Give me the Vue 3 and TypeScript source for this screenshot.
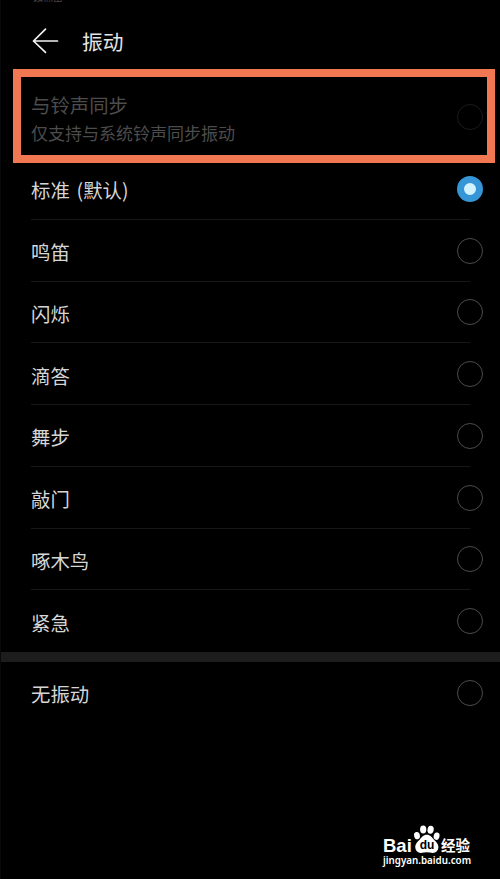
<script setup lang="ts">
import { ref } from 'vue'

const options: string[] = ['标准 (默认)', '鸣笛', '闪烁', '滴答', '舞步', '敲门', '啄木鸟', '紧急']
const selected = ref<string>('标准 (默认)')
</script>

<template>
  <main class="screen">
    <div class="status"><span class="carrier">移动电</span></div>
    <header class="header">
      <svg class="back" viewBox="0 0 28 28" aria-hidden="true">
        <path d="M14.5 2.2 2.5 14 14.5 25.4M2.5 14H26.5" />
      </svg>
      <h1 class="title">振动</h1>
    </header>

    <section class="sync">
      <div class="sync-text">
        <div class="sync-name">与铃声同步</div>
        <div class="sync-note">仅支持与系统铃声同步振动</div>
      </div>
      <span class="radio disabled"></span>
      <div class="highlight"></div>
    </section>

    <section class="list">
      <div v-for="name in options" :key="name" class="row" @click="selected = name">
        <span class="label">{{ name }}</span>
        <span class="radio" :class="{ on: selected === name }"></span>
      </div>
    </section>

    <div class="band"></div>

    <div class="row last" @click="selected = '无振动'">
      <span class="label">无振动</span>
      <span class="radio" :class="{ on: selected === '无振动' }"></span>
    </div>

    <footer class="brand">
      <div class="brand-top">
        <span class="bai">Bai</span>
        <span class="paw">
          <svg viewBox="0 0 28 30" aria-hidden="true">
            <ellipse cx="4" cy="10.6" rx="2.9" ry="3.7" transform="rotate(-12 4 10.6)" />
            <ellipse cx="10.2" cy="4.5" rx="3.1" ry="4" />
            <ellipse cx="17.6" cy="4.7" rx="3.1" ry="4" transform="rotate(10 17.6 4.7)" />
            <ellipse cx="23.6" cy="11.2" rx="2.9" ry="3.7" transform="rotate(12 23.6 11.2)" />
            <path d="M13.8 9.8c-3.6 0-5 2.4-7 4.6-2.6 2.6-4.8 4.6-4.5 8.2.3 3.7 2.8 5.4 5.6 5.3 2.1-.1 3.8-.6 5.9-.6s3.9.5 5.9.6c3 .1 5.4-1.6 5.7-5.3.3-3.6-2.2-5.8-4.6-8.2-2.1-2.2-3.4-4.6-7-4.6z" />
          </svg>
          <span class="du">du</span>
        </span>
        <span class="jingyan">经验</span>
      </div>
      <div class="url">jingyan.baidu.com</div>
    </footer>
  </main>
</template>

<style>
body {
  margin: 0;
  background: #000;
}
</style>

<style scoped>
.screen {
  position: relative;
  box-sizing: border-box;
  width: 500px;
  height: 879px;
  overflow: hidden;
  background: #000;
  border-left: 1px solid #07090d;
  padding-left: 30px;
  color: #d6d6d6;
  font-family: "Noto Sans CJK SC", sans-serif;
}
.status {
  height: 10px;
}
.carrier {
  display: block;
  height: 2px;
  padding-left: 2px;
  overflow: hidden;
  font-size: 10px;
  line-height: 0;
  color: #444;
}
.header {
  display: flex;
  align-items: center;
  height: 62px;
}
.back {
  width: 28px;
  height: 28px;
  margin-right: 23px;
  fill: none;
  stroke: #f2f2f2;
  stroke-width: 1.7;
  stroke-linecap: round;
  stroke-linejoin: round;
}
.title {
  margin: 0;
  font-size: 20.7px;
  line-height: 30px;
  font-weight: 400;
  color: #e4e4e4;
}
.sync {
  position: relative;
  display: flex;
  align-items: center;
  justify-content: space-between;
  box-sizing: border-box;
  height: 86px;
  padding: 4px 17px 0 0;
}
.sync-text {
  padding-top: 4px;
  color: #4c4c4c;
}
.sync-name {
  font-size: 19.4px;
  line-height: 28px;
}
.sync-note {
  font-size: 17px;
  line-height: 28px;
}
.highlight {
  position: absolute;
  box-sizing: border-box;
  left: -18px;
  top: -3px;
  width: 482px;
  height: 94px;
  border: 8px solid #f17853;
}
.row {
  display: flex;
  align-items: center;
  justify-content: space-between;
  position: relative;
  box-sizing: border-box;
  height: 61.75px;
  padding-right: 17px;
}
.row:not(:last-child):not(.last)::after {
  content: "";
  position: absolute;
  left: 0;
  right: 30px;
  bottom: 0;
  height: 1px;
  background: #171717;
}
.label {
  font-size: 19.4px;
  line-height: 28px;
  padding-top: 3px;
  word-spacing: 2.5px;
}
.radio {
  box-sizing: border-box;
  width: 26px;
  height: 26px;
  border: 1.5px solid #4c4c4c;
  border-radius: 50%;
  flex: none;
}
.radio.disabled {
  border-color: #1b1b1b;
}
.radio.on {
  border: 7px solid #3695d6;
  background: #d2f3fd;
}
.band {
  height: 10px;
  margin-left: -31px;
  background: #1d1d1d;
}
.last {
  height: 61px;
}
.brand {
  position: absolute;
  left: 382px;
  top: 825px;
  width: 92px;
  color: #fff;
  font-family: "Liberation Sans", sans-serif;
}
.brand-top {
  display: flex;
  height: 29px;
}
.bai {
  box-sizing: border-box;
  width: 30px;
  font-size: 18.5px;
  line-height: 23px;
  padding-top: 9px;
  font-weight: 700;
}
.paw {
  position: relative;
  width: 28px;
  height: 30px;
}
.paw svg {
  display: block;
  width: 28px;
  height: 30px;
  fill: #fff;
}
.du {
  position: absolute;
  left: 0;
  top: 13px;
  width: 28px;
  text-align: center;
  font-size: 12px;
  line-height: 14px;
  font-weight: 700;
  color: #000;
}
.jingyan {
  font-family: "Noto Sans CJK SC", sans-serif;
  font-size: 14.5px;
  line-height: 22px;
  padding-top: 9px;
  font-weight: 700;
  white-space: nowrap;
}
.url {
  font-family: "Noto Sans", sans-serif;
  font-size: 9.8px;
  line-height: 14px;
  font-weight: 600;
  white-space: nowrap;
}
</style>
